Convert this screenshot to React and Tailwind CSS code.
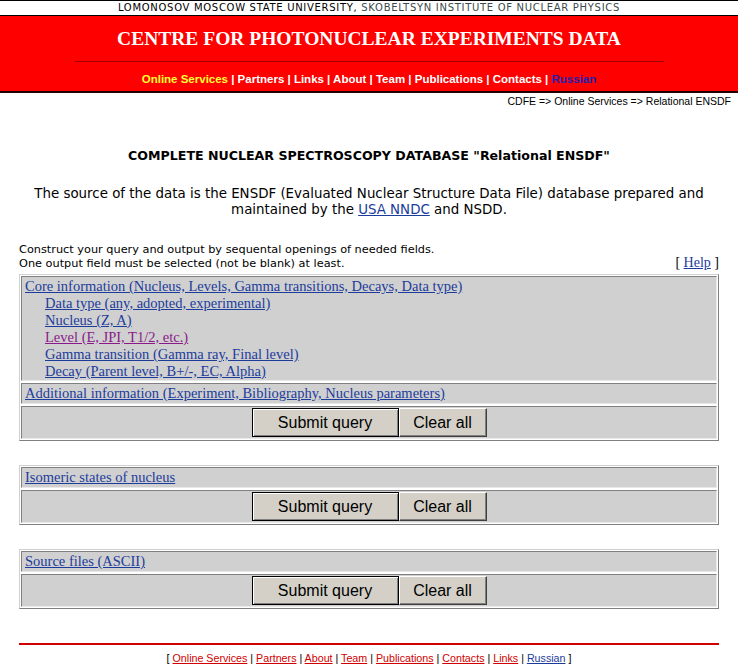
const sans = "font-['Liberation_Sans',Arial,sans-serif]";
const tahoma = "font-['DejaVu_Sans',Tahoma,sans-serif]";
const serif = "font-['Liberation_Serif','Times_New_Roman',serif]";
const link = "text-[#1c3c9c] underline";

const Buttons = () => (
    <div className="flex justify-center py-px">
        <button className={`${sans} w-[147px] h-[29px] text-[16px] text-black bg-[#d4d0c8] border border-black shadow-[inset_1px_1px_0_#fff,inset_-1px_-1px_0_#808080]`}>
            Submit query
        </button>
        <button className={`${sans} w-[88px] h-[29px] text-[16px] text-black bg-[#d4d0c8] border-t border-l border-t-white border-l-white border-r border-b border-r-[#404040] border-b-[#404040] shadow-[inset_-1px_-1px_0_#808080]`}>
            Clear all
        </button>
    </div>
);

const Cell = ({ children, className = "" }) => (
    <div className={`bg-[#d0d0d0] border border-t-[#808080] border-l-[#808080] border-b-[#e8e8e8] border-r-[#e8e8e8] ${className}`}>
        {children}
    </div>
);

const QueryTable = ({ children }) => (
    <div className="border border-t-[#d0d0d0] border-l-[#d0d0d0] border-b-[#808080] border-r-[#808080] bg-white p-px flex flex-col gap-[2px]">
        {children}
    </div>
);

const footerLink = "text-[#d00000] underline";

export default function App() {
    return (
        <div className="bg-white min-h-[667px] text-black">
            {/* top band */}
            <div className="border-t border-black h-[15px] flex justify-center items-center">
                <span className="font-['DejaVu_Sans',Verdana,sans-serif] text-[10px] tracking-[0.7px] leading-none">
                    LOMONOSOV MOSCOW STATE UNIVERSITY, <span className="text-[#3a4a4a]">SKOBELTSYN INSTITUTE OF NUCLEAR PHYSICS</span>
                </span>
            </div>
            <div className="bg-[#fe0000] border-t border-black border-b-2 border-b-[#200000] h-[78px] flex flex-col items-center">
                <div className={`${serif} font-bold text-white text-[19.5px] leading-none mt-[13px]`}>
                    CENTRE FOR PHOTONUCLEAR EXPERIMENTS DATA
                </div>
                <div className="w-[589px] h-px bg-[#a00000] mt-[12px]" />
                <div className={`${sans} font-bold text-[11.5px] text-white mt-[12px] leading-none`}>
                    <span className="text-[#ffff33]">Online Services</span> | Partners | Links | About | Team | Publications | Contacts | <span className="text-[#2020b0]">Russian</span>
                </div>
            </div>
            <div className={`${sans} text-[10.5px] text-right pr-[7px] mt-[1px] leading-[14px]`}>
                CDFE =&gt; Online Services =&gt; Relational ENSDF
            </div>

            <div className="w-[700px] mx-auto">
                <div className={`${tahoma} font-bold text-[12.6px] text-center mt-[40px] leading-[16px]`}>
                    COMPLETE NUCLEAR SPECTROSCOPY DATABASE "Relational ENSDF"
                </div>
                <div className={`${tahoma} text-[13.4px] text-center mt-[22px] leading-[16px]`}>
                    The source of the data is the ENSDF (Evaluated Nuclear Structure Data File) database prepared and
                    <br />
                    maintained by the <span className={link}>USA NNDC</span> and NSDD.
                </div>

                <div className="flex justify-between items-end mt-[25px]">
                    <div className={`${tahoma} text-[11.3px] leading-[14px]`}>
                        Construct your query and output by sequental openings of needed fields.
                        <br />
                        One output field must be selected (not be blank) at least.
                    </div>
                    <div className={`${serif} text-[14px] leading-[16px]`}>
                        [ <span className={link}>Help</span> ]
                    </div>
                </div>

                <div className="mt-[3px]">
                    <QueryTable>
                        <Cell className={`${serif} text-[14.5px] leading-[17px] pl-[3px] pt-px`}>
                            <div className={link}>Core information (Nucleus, Levels, Gamma transitions, Decays, Data type)</div>
                            <div className="pl-[20px] flex flex-col items-start">
                                <span className={link}>Data type (any, adopted, experimental)</span>
                                <span className={link}>Nucleus (Z, A)</span>
                                <span className="text-[#8a1a8a] underline">Level (E, JPI, T1/2, etc.)</span>
                                <span className={link}>Gamma transition (Gamma ray, Final level)</span>
                                <span className={link}>Decay (Parent level, B+/-, EC, Alpha)</span>
                            </div>
                        </Cell>
                        <Cell className={`${serif} text-[14.5px] leading-[19px] pl-[3px]`}>
                            <span className={link}>Additional information (Experiment, Bibliography, Nucleus parameters)</span>
                        </Cell>
                        <Cell>
                            <Buttons />
                        </Cell>
                    </QueryTable>
                </div>

                <div className="mt-[24px]">
                    <QueryTable>
                        <Cell className={`${serif} text-[14.5px] leading-[19px] pl-[3px]`}>
                            <span className={link}>Isomeric states of nucleus</span>
                        </Cell>
                        <Cell>
                            <Buttons />
                        </Cell>
                    </QueryTable>
                </div>

                <div className="mt-[24px]">
                    <QueryTable>
                        <Cell className={`${serif} text-[14.5px] leading-[19px] pl-[3px]`}>
                            <span className={link}>Source files (ASCII)</span>
                        </Cell>
                        <Cell>
                            <Buttons />
                        </Cell>
                    </QueryTable>
                </div>

                <div className="border-t-2 border-[#d00000] mt-[34px]" />
                <div className={`${sans} text-[10.7px] text-center mt-[6px] leading-[14px]`}>
                    [ <span className={footerLink}>Online Services</span> | <span className={footerLink}>Partners</span> | <span className={footerLink}>About</span> | <span className={footerLink}>Team</span> | <span className={footerLink}>Publications</span> | <span className={footerLink}>Contacts</span> | <span className={footerLink}>Links</span> | <span className="text-[#1c3c9c] underline">Russian</span> ]
                </div>
            </div>
        </div>
    );
}
